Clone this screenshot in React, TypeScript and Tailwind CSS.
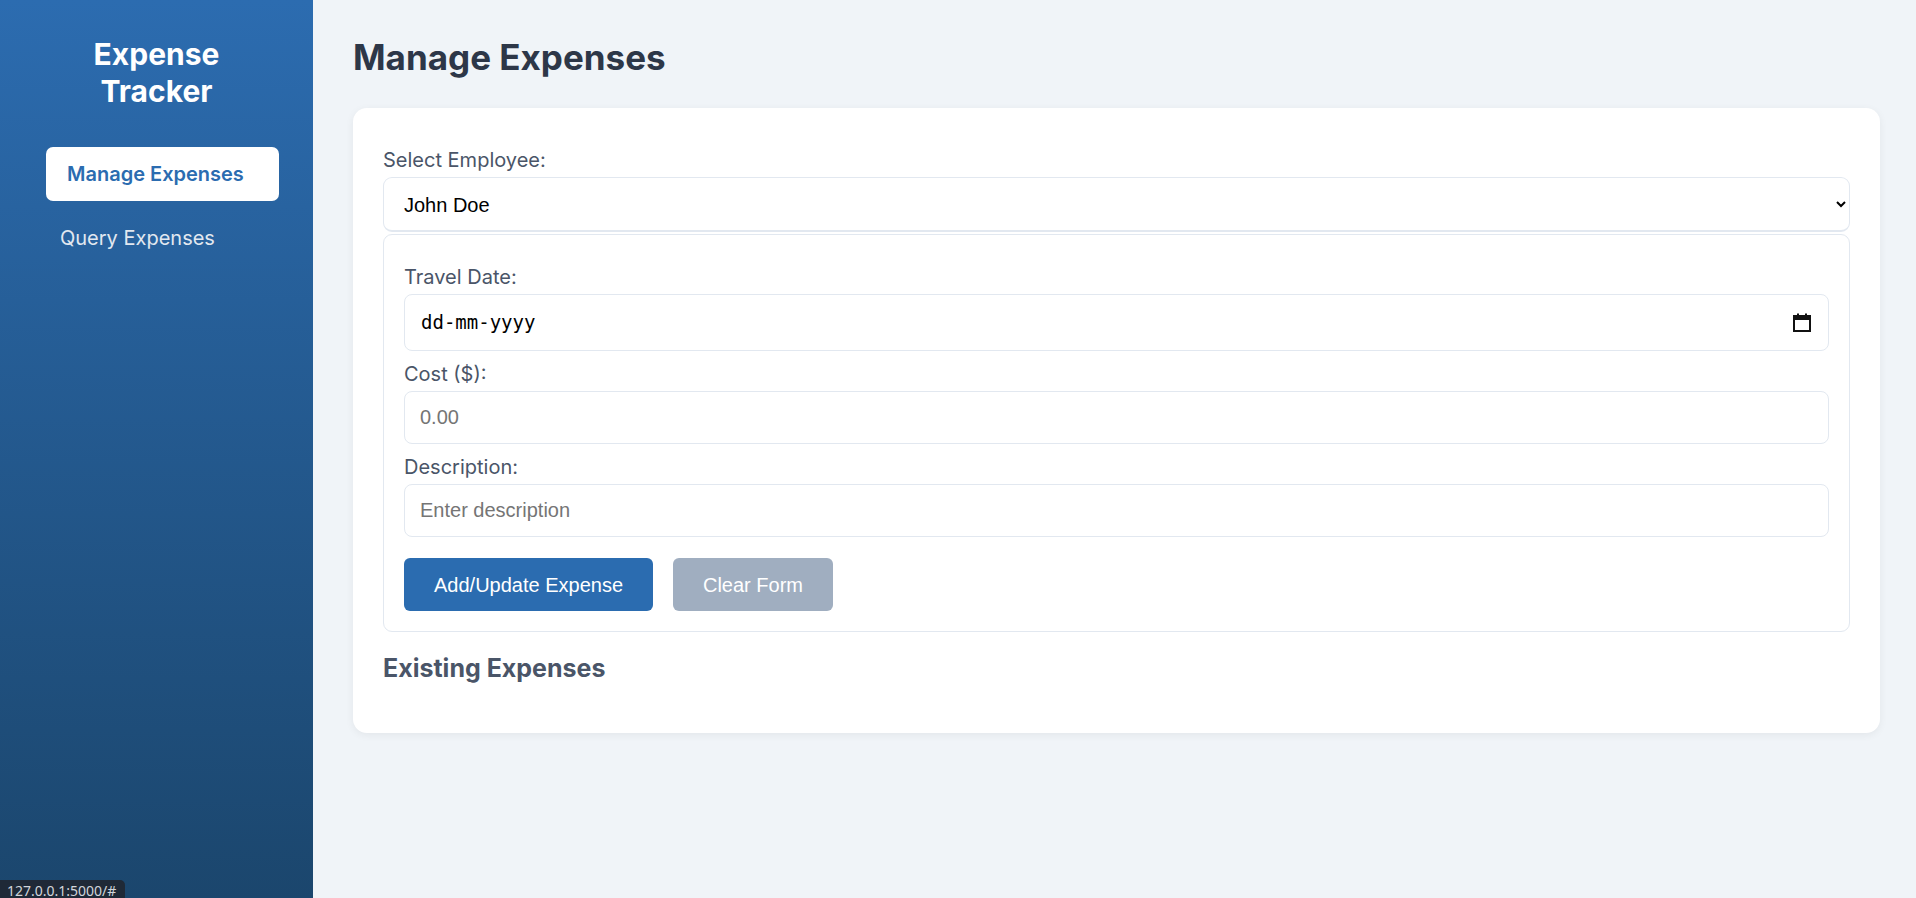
import { useState } from "react";

const inter = { fontFamily: '"Inter", "Noto Sans", sans-serif' };

const Field = (props: { label: string; children: React.ReactNode; first?: boolean }) => {
    return (
        <div className={props.first ? "mt-[10px]" : "mt-[11px]"}>
            <label className="block text-[20px] leading-[24px] text-[#4a5568] mb-[5px]" style={inter}>{props.label}</label>
            {props.children}
        </div>
    )
}

export default function App() {
    const [employee, setEmployee] = useState("John Doe");
    const [cost, setCost] = useState("");
    const [description, setDescription] = useState("");

    return (
        <div className="flex min-h-[898px] w-full bg-[#f0f4f8]" style={{ fontFamily: '"Liberation Sans", Arial, sans-serif' }}>
            {/* sidebar */}
            <aside className="relative w-[313px] shrink-0 overflow-hidden bg-gradient-to-b from-[#2c6cb0] to-[#1b466d] text-white">
                <h1 className="pt-[36px] text-center text-[30px] leading-[37px] font-bold" style={inter}>Expense<br />Tracker</h1>
                <nav className="mt-[37px] flex flex-col gap-[10px] pl-[46px]">
                    <a href="#" className="flex h-[54px] w-[233px] items-center rounded-[7px] bg-white pl-[21px] text-[20px] font-semibold text-[#2b6cb0]" style={inter}>Manage Expenses</a>
                    <a href="#" className="flex h-[54px] w-[233px] items-center pl-[14px] text-[20px] font-normal text-[#e2e8f0]" style={inter}>Query Expenses</a>
                </nav>
                <div className="absolute bottom-0 left-0 h-[18px] rounded-tr-[5px] bg-[#1f2937] pl-[7px] pr-[9px] pt-[2px] text-[14px] leading-[17px] text-[#d1d5db]" style={{ fontFamily: '"Noto Sans", sans-serif' }}>127.0.0.1:5000/#</div>
            </aside>

            {/* main */}
            <main className="flex-1 pl-[40px] pr-[36px] pt-[35px]">
                <h2 className="text-[35px] leading-[44px] font-bold text-[#2d3748]" style={inter}>Manage Expenses</h2>
                <div className="mt-[29px] rounded-[14px] bg-white px-[30px] pt-[40px] pb-[50px] shadow-[0_2px_8px_rgba(0,0,0,0.06)]">
                    <label className="block text-[20px] leading-[24px] text-[#4a5568] mb-[5px]" style={inter}>Select Employee:</label>
                    <select
                        value={employee}
                        onChange={(e) => setEmployee(e.target.value)}
                        className="block h-[55px] w-full rounded-[9px] border border-[#e2e8f0] border-b-2 bg-white pl-[16px] pr-[10px] pt-[2px] text-[20px] text-black"
                    >
                        <option>John Doe</option>
                        <option>Jane Smith</option>
                    </select>

                    <div className="mt-[2px] rounded-[9px] border border-[#e2e8f0] px-[20px] pt-[20px] pb-[20px]">
                        <Field label="Travel Date:" first>
                            <div className="flex h-[57px] w-full items-center justify-between rounded-[8px] border border-[#e2e8f0] pl-[16px] pr-[17px]">
                                <span className="text-[19px] text-black" style={{ fontFamily: '"DejaVu Sans Mono", monospace' }}>dd-mm-yyyy</span>
                                <svg width="18" height="19" viewBox="0 0 18 19" fill="none">
                                    <rect x="1" y="3" width="16" height="15" stroke="#111" strokeWidth="2" />
                                    <rect x="1" y="3" width="16" height="4" fill="#111" />
                                    <rect x="4" y="0.5" width="2" height="3" fill="#111" />
                                    <rect x="12" y="0.5" width="2" height="3" fill="#111" />
                                </svg>
                            </div>
                        </Field>
                        <Field label="Cost ($):">
                            <input
                                type="text"
                                value={cost}
                                onChange={(e) => setCost(e.target.value)}
                                placeholder="0.00"
                                className="block h-[53px] w-full rounded-[8px] border border-[#e2e8f0] px-[15px] text-[20px] text-black placeholder:text-[#757575] outline-none"
                            />
                        </Field>
                        <Field label="Description:">
                            <input
                                type="text"
                                value={description}
                                onChange={(e) => setDescription(e.target.value)}
                                placeholder="Enter description"
                                className="block h-[53px] w-full rounded-[8px] border border-[#e2e8f0] px-[15px] text-[20px] text-black placeholder:text-[#757575] outline-none"
                            />
                        </Field>
                        <div className="mt-[21px] flex gap-[20px]">
                            <button className="h-[53px] w-[249px] rounded-[6px] bg-[#2b6cb0] text-[20px] text-white">Add/Update Expense</button>
                            <button className="h-[53px] w-[160px] rounded-[6px] bg-[#a0aec0] text-[20px] text-white" onClick={() => { setCost(""); setDescription(""); }}>Clear Form</button>
                        </div>
                    </div>

                    <h3 className="mt-[22px] text-[25px] leading-[29px] font-bold text-[#4a5568]" style={inter}>Existing Expenses</h3>
                </div>
            </main>
        </div>
    )
}
